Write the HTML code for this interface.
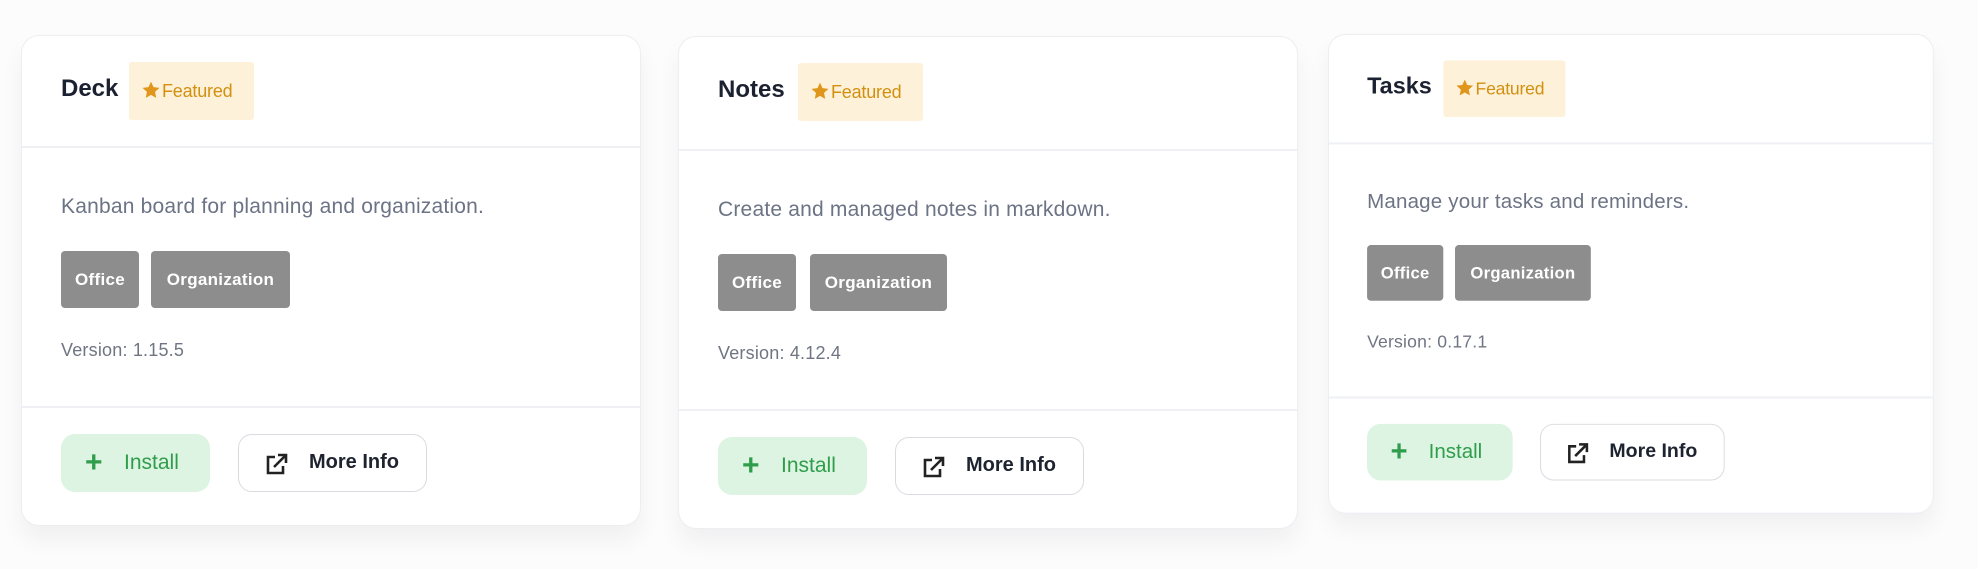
<!DOCTYPE html>
<html><head><meta charset="utf-8"><style>
*{box-sizing:border-box;margin:0;padding:0}
body{width:1978px;height:569px;background:#fcfcfd;font-family:"Liberation Sans",sans-serif;position:relative;overflow:hidden}
.card{position:absolute;width:620px;height:491px;background:#fff;border:1px solid #eceef2;border-radius:18px;box-shadow:0 14px 24px rgba(0,0,0,0.05);transform-origin:0 0}
.card>*{position:absolute}
.title{left:39px;top:38px;font-size:24px;font-weight:bold;color:#1b2130;line-height:30px}
.badge{top:26px;height:58px;background:#fdf1d9;border-radius:3px;color:#d3900f;font-size:18px;line-height:58px;padding-left:12px;width:125px;letter-spacing:-0.2px}
.badge svg{vertical-align:-3px;margin-right:1px}
.hr{left:0;right:0;height:2px;background:#eef0f4}
.desc{left:39px;top:158px;font-size:21px;color:#6b7385;line-height:26px;letter-spacing:0.2px}
.tag{top:215px;height:57px;background:#8d8d8d;border-radius:4px;color:#fff;font-size:17px;font-weight:bold;line-height:57px;text-align:center;letter-spacing:0.3px}
.ver{left:39px;top:303px;font-size:18px;color:#6f7583;line-height:22px;letter-spacing:0.2px}
.inst{left:39px;top:398px;width:149px;height:58px;background:#dcf4e1;border-radius:14px;color:#2f9d4b;font-size:21px;line-height:58px}
.inst b{position:absolute;left:24px;top:0;font-size:30px;font-weight:bold}
.inst span{position:absolute;left:63px}
.more{left:216px;top:398px;width:189px;height:58px;border:1.5px solid #d9dbe0;border-radius:14px;color:#1e2330;font-size:20px;font-weight:bold;line-height:55px}
.more svg{position:absolute;left:26px;top:18px}
.more span{position:absolute;left:70px}
</style></head><body>

<div class="card" style="left:21px;top:35px">
 <div class="title">Deck</div>
 <div class="badge" style="left:107px"><svg width="20" height="20" viewBox="0 0 24 24"><path fill="#e0961a" d="M12 2l3 6.6 7.2.8-5.4 4.9 1.5 7.1L12 17.8 5.7 21.4l1.5-7.1L1.8 9.4 9 8.6z"/></svg>Featured</div>
 <div class="hr" style="top:110px"></div>
 <div class="desc">Kanban board for planning and organization.</div>
 <div class="tag" style="left:39px;width:78px">Office</div>
 <div class="tag" style="left:129px;width:139px">Organization</div>
 <div class="ver">Version: 1.15.5</div>
 <div class="hr" style="top:370px"></div>
 <div class="inst"><b>+</b><span>Install</span></div>
 <div class="more"><svg width="24" height="22" viewBox="0 0 24 22"><path d="M10 4H3v16h15v-7" fill="none" stroke="#222" stroke-width="2.6"/><path d="M9 14L20 3M13 2h8v8" fill="none" stroke="#222" stroke-width="2.6"/></svg><span>More Info</span></div>
</div>

<div class="card" style="left:678px;top:36px;height:493px">
 <div class="title">Notes</div>
 <div class="badge" style="left:119px"><svg width="20" height="20" viewBox="0 0 24 24"><path fill="#e0961a" d="M12 2l3 6.6 7.2.8-5.4 4.9 1.5 7.1L12 17.8 5.7 21.4l1.5-7.1L1.8 9.4 9 8.6z"/></svg>Featured</div>
 <div class="hr" style="top:112px"></div>
 <div class="desc" style="top:160px">Create and managed notes in markdown.</div>
 <div class="tag" style="left:39px;width:78px;top:217px">Office</div>
 <div class="tag" style="left:131px;width:137px;top:217px">Organization</div>
 <div class="ver" style="top:305px">Version: 4.12.4</div>
 <div class="hr" style="top:372px"></div>
 <div class="inst" style="top:400px"><b>+</b><span>Install</span></div>
 <div class="more" style="top:400px"><svg width="24" height="22" viewBox="0 0 24 22"><path d="M10 4H3v16h15v-7" fill="none" stroke="#222" stroke-width="2.6"/><path d="M9 14L20 3M13 2h8v8" fill="none" stroke="#222" stroke-width="2.6"/></svg><span>More Info</span></div>
</div>

<div class="card" style="left:1328px;top:34px;transform:scale(0.977)">
 <div class="title">Tasks</div>
 <div class="badge" style="left:117px"><svg width="20" height="20" viewBox="0 0 24 24"><path fill="#e0961a" d="M12 2l3 6.6 7.2.8-5.4 4.9 1.5 7.1L12 17.8 5.7 21.4l1.5-7.1L1.8 9.4 9 8.6z"/></svg>Featured</div>
 <div class="hr" style="top:110px"></div>
 <div class="desc">Manage your tasks and reminders.</div>
 <div class="tag" style="left:39px;width:78px">Office</div>
 <div class="tag" style="left:129px;width:139px">Organization</div>
 <div class="ver">Version: 0.17.1</div>
 <div class="hr" style="top:370px"></div>
 <div class="inst"><b>+</b><span>Install</span></div>
 <div class="more"><svg width="24" height="22" viewBox="0 0 24 22"><path d="M10 4H3v16h15v-7" fill="none" stroke="#222" stroke-width="2.6"/><path d="M9 14L20 3M13 2h8v8" fill="none" stroke="#222" stroke-width="2.6"/></svg><span>More Info</span></div>
</div>

</body></html>
